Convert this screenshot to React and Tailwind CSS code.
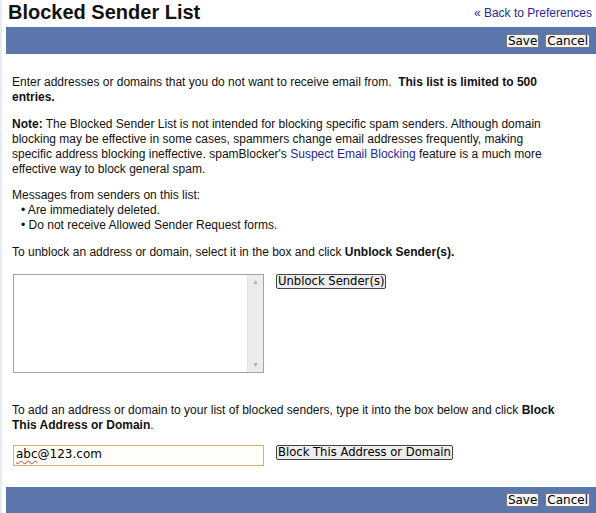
import React from "react";

const BAR = "bg-[#5b76ad]";

function SmallButton({ children }) {
  return (
    <button
      type="button"
      className="bg-[#f4f4f4] border border-[#7a7a7a] rounded-[2px] px-[1px] h-[14px] leading-[12px] text-[12px] text-black font-['DejaVu_Sans',sans-serif]"
    >
      {children}
    </button>
  );
}

function ActionBar({ className = "" }) {
  return (
    <div className={`${BAR} ml-1 h-[27px] flex items-center justify-end gap-[6px] pr-[6px] ${className}`}>
      <SmallButton>Save</SmallButton>
      <SmallButton>Cancel</SmallButton>
    </div>
  );
}

function FormButton({ children }) {
  return (
    <button
      type="button"
      className="bg-[#ededed] border border-[#444] rounded-[2px] px-[1px] h-[15px] leading-[13px] text-[11.6px] text-black font-['DejaVu_Sans',sans-serif] whitespace-nowrap"
    >
      {children}
    </button>
  );
}

export default function App() {
  return (
    <div className="w-[596px] h-[513px] overflow-hidden bg-white border-l-2 border-[#e4ecf5] font-['Liberation_Sans',Arial,sans-serif] text-[#111]">
      <div className="flex items-start justify-between pl-1.5 pr-1 h-[27px]">
        <h1 className="text-[20px] font-bold leading-[24px]">Blocked Sender List</h1>
        <a href="#" className="text-[12px] leading-[14px] mt-[6px] text-[#27279a]">
          « Back to Preferences
        </a>
      </div>

      <ActionBar />

      <div className="px-2.5 max-w-[568px] text-[12px] leading-[15.3px]">
        <p className="mt-[21px]">
          Enter addresses or domains that you do not want to receive email from.&nbsp; <b>This list is limited to 500 entries.</b>
        </p>

        <p className="mt-[11px]">
          <b>Note:</b> The Blocked Sender List is not intended for blocking specific spam senders. Although domain blocking may
          be effective in some cases, spammers change email addresses frequently, making specific address blocking ineffective.
          spamBlocker's <a href="#" className="text-[#27279a]">Suspect Email Blocking</a> feature is a much more effective way to
          block general spam.
        </p>

        <div className="mt-[10px]">
          <p>Messages from senders on this list:</p>
          <ul className="pl-[9px]">
            <li>• Are immediately deleted.</li>
            <li>• Do not receive Allowed Sender Request forms.</li>
          </ul>
        </div>

        <p className="mt-[11px]">
          To unblock an address or domain, select it in the box and click <b>Unblock Sender(s).</b>
        </p>

        <div className="flex items-start gap-[12px] mt-[14px] pl-[1px]">
          <div className="w-[251px] h-[99px] border border-[#a3a3a3] flex">
            <div className="flex-1" />
            <div className="w-[16px] bg-[#ececec] border-l border-[#e2e2e2] flex flex-col items-center justify-between py-[3px] text-[7px] leading-[8px] text-[#b0b0b0]">
              <span>▲</span>
              <span>▼</span>
            </div>
          </div>
          <FormButton>Unblock Sender(s)</FormButton>
        </div>

        <p className="mt-[30px]">
          To add an address or domain to your list of blocked senders, type it into the box below and click{" "}
          <b>Block This Address or Domain</b>.
        </p>

        <div className="flex items-start gap-[12px] mt-[11px] pl-[1px]">
          <div className="w-[251px] h-[21px] border border-[#d4b06a] bg-[#fffef9] flex items-center pl-[2px] text-[12px] font-['DejaVu_Sans',sans-serif] text-black">
            <span className="underline decoration-wavy decoration-[#d04040] decoration-[1px] underline-offset-2">abc</span>
            @123.com
          </div>
          <FormButton>Block This Address or Domain</FormButton>
        </div>
      </div>

      <ActionBar className="mt-[21px]" />
    </div>
  );
}
